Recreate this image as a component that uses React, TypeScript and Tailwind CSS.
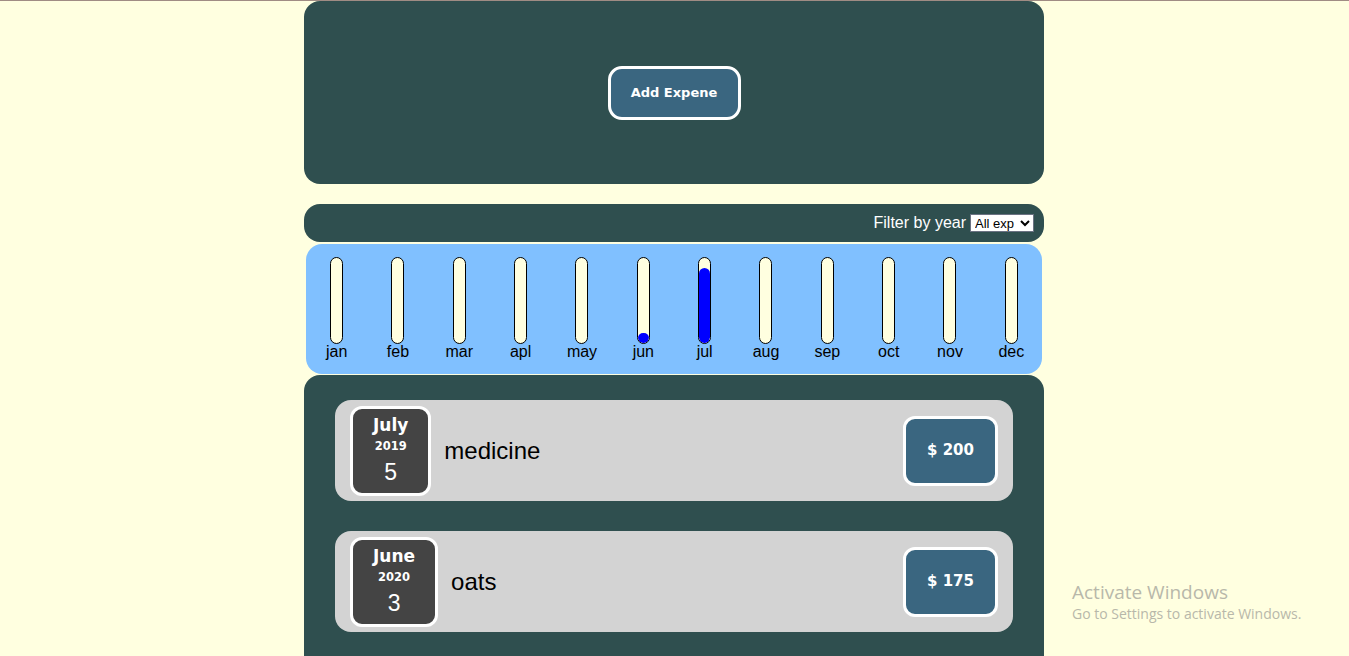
const months = ["jan", "feb", "mar", "apl", "may", "jun", "jul", "aug", "sep", "oct", "nov", "dec"];
const fills: Record<string, number> = { jun: 12, jul: 88 };

const expenses = [
  { month: "July", year: "2019", day: "5", title: "medicine", amount: 200 },
  { month: "June", year: "2020", day: "3", title: "oats", amount: 175 },
];

function ChartBar({ label }: { label: string }) {
  const fill = fills[label] ?? 0;
  return (
    <div className="flex flex-col items-center">
      <div className="flex h-[87px] w-[13px] flex-col justify-end overflow-hidden rounded-full border border-black bg-[#ffffe0]">
        {fill > 0 ? <div className="w-full rounded-full bg-[#0000ff]" style={{ height: `${fill}%` }} /> : null}
      </div>
      <div className="-mt-px text-base leading-[18px] text-black">{label}</div>
    </div>
  );
}

function ExpenseItem({ month, year, day, title, amount }: (typeof expenses)[number]) {
  return (
    <div className="flex h-[101px] items-center rounded-2xl bg-[#d3d3d3] px-[15px]">
      <div className="flex h-[90px] flex-col items-center justify-center rounded-xl border-[3px] border-white bg-[#444444] px-[20px] pt-[3px] text-white">
        <div className="font-['DejaVu_Sans',sans-serif] text-[17px] font-bold leading-[21px]">{month}</div>
        <div className="font-['DejaVu_Sans',sans-serif] text-[11.5px] font-bold leading-[20px]">{year}</div>
        <div className="text-[23px] leading-[33px]">{day}</div>
      </div>
      <div className="ml-[13px] flex-1 text-[24px] text-black">{title}</div>
      <div className="flex h-[70px] w-[95px] items-center justify-center rounded-xl border-[3px] border-white bg-[#3a6680] font-['DejaVu_Sans',sans-serif] text-[15px] font-bold text-white">
        $ {amount}
      </div>
    </div>
  );
}

export default function App() {
  return (
    <div className="relative min-h-screen overflow-hidden bg-[#ffffe0] font-['Liberation_Sans',Arial,sans-serif]">
      <div className="h-px bg-[#a08c84]" />
      <div className="ml-[304px] flex w-[740px] flex-col">
        <div className="flex h-[183px] items-center justify-center rounded-2xl bg-[#2f4f4f]">
          <button
            type="button"
            className="mt-px h-[54px] w-[133px] rounded-[14px] border-[3px] border-white bg-[#3a6680] font-['DejaVu_Sans',sans-serif] text-[13px] font-bold text-white"
          >
            Add Expene
          </button>
        </div>

        <div className="mt-5 flex h-[38px] items-center justify-end gap-1 rounded-2xl bg-[#2f4f4f] pr-[10px]">
          <span className="text-base text-white">Filter by year</span>
          <select className="h-[18px] w-[64px] border border-gray-500 bg-white text-[13px] leading-none text-black">
            <option>All exp</option>
          </select>
        </div>

        <div className="mx-[2px] mt-[2px] grid h-[130px] grid-cols-12 rounded-2xl bg-[#80c0ff] pt-[13px]">
          {months.map((m) => (
            <ChartBar key={m} label={m} />
          ))}
        </div>

        <div className="mt-px flex flex-col gap-[30px] rounded-t-2xl bg-[#2f4f4f] px-[31px] pb-8 pt-[25px]">
          {expenses.map((e) => (
            <ExpenseItem key={e.title} {...e} />
          ))}
        </div>
      </div>

      <div className="pointer-events-none absolute left-[1072px] top-[580px] font-['Open_Sans',sans-serif] text-[#b8b8aa]">
        <div className="text-[19px] leading-6">Activate Windows</div>
        <div className="text-[14px] leading-5">Go to Settings to activate Windows.</div>
      </div>
    </div>
  );
}
